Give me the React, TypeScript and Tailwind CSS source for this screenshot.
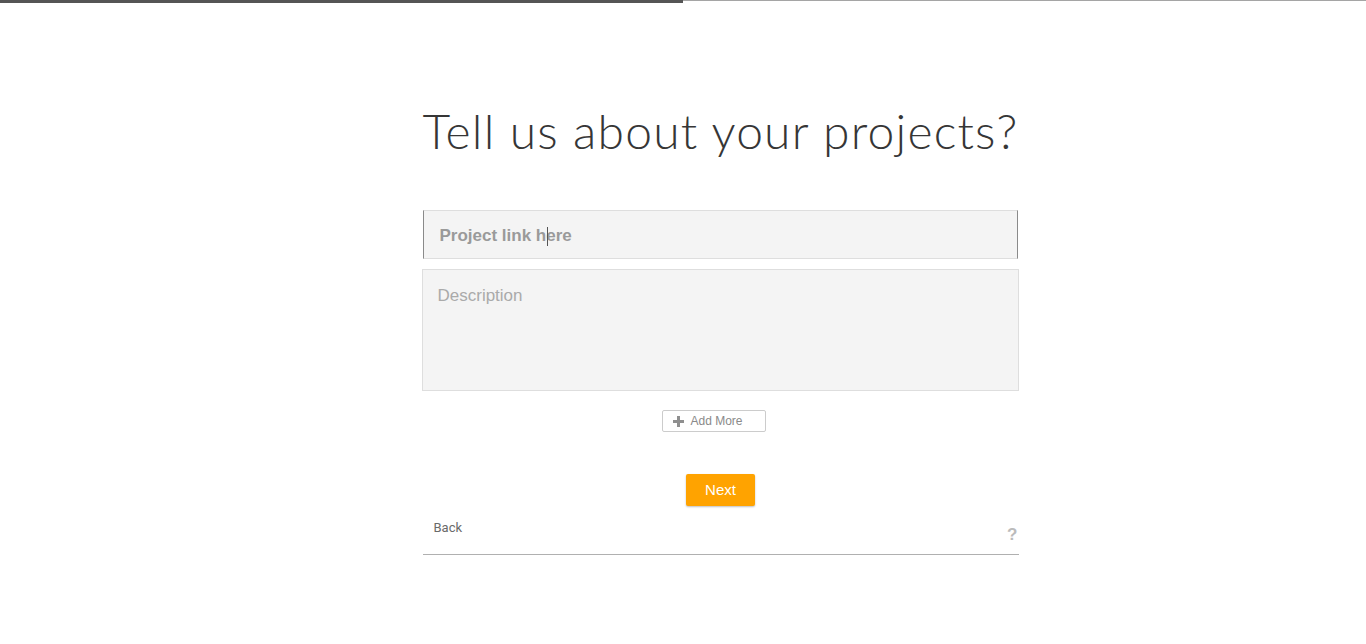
import { useState } from 'react';

const App = () => {
  const [link, setLink] = useState('');
  const [description, setDescription] = useState('');

  return (
    <div className="relative min-h-[644px] w-full bg-white font-['Liberation_Sans',Arial,sans-serif]">
      {/* progress */}
      <div className="flex h-[3px] w-full items-start">
        <div className="h-[3px] w-[683px] bg-[#555555]" />
        <div className="h-px flex-1 bg-[#a5a5a5]" />
      </div>

      <div className="flex justify-center pl-[75px]">
        <div className="flex w-[596px] flex-col items-stretch pt-[100px]">
          <h1 className="whitespace-nowrap text-center font-['Lato',sans-serif] text-[48px] font-light leading-[56px] tracking-[1.2px] text-[#363636]">
            Tell us about your projects?
          </h1>

          <div className="relative mt-[51px]">
            <input
              type="text"
              value={link}
              onChange={(e) => setLink(e.target.value)}
              placeholder="Project link here"
              className="h-[49px] w-[595px] border border-x-[#8a8a8a] border-y-[#dedede] bg-[#f4f4f4] px-4 pt-[3px] text-[17px] font-bold text-[#777] outline-none placeholder:text-[#9a9a9a]"
            />
            {!link && <span className="pointer-events-none absolute left-[124px] top-[17px] h-[19px] w-px bg-[#555]" />}
          </div>

          <textarea
            value={description}
            onChange={(e) => setDescription(e.target.value)}
            placeholder="Description"
            className="mt-[10px] h-[122px] w-[597px] -ml-px resize-none border border-[#dedede] bg-[#f4f4f4] px-[15px] pt-[13px] text-[17px] text-[#777] outline-none placeholder:text-[#aaaaaa]"
          />

          <div className="mt-[19px] flex justify-start pl-[239px]">
            <button
              type="button"
              className="flex h-[22px] w-[104px] items-center gap-[7px] rounded-[2px] border border-[#cccccc] bg-white pl-[10px] text-[12px] text-[#8a8a8a]"
            >
              <svg width="11" height="11" viewBox="0 0 11 11" className="shrink-0">
                <path d="M4 0h3v4h4v3H7v4H4V7H0V4h4z" fill="#8f8f8f" />
              </svg>
              Add More
            </button>
          </div>

          <div className="mt-[42px] flex justify-center">
            <button
              type="button"
              className="h-[32px] w-[69px] rounded-[2px] bg-[#ffa300] text-[15px] text-white shadow-[0_1px_2px_rgba(0,0,0,0.25)]"
            >
              Next
            </button>
          </div>

          <div className="mt-[12px] flex items-start justify-between border-b border-[#b0b0b0] pb-[9px]">
            <a href="#" className="ml-[11px] font-['Roboto',sans-serif] text-[13px] text-[#6a6a6a]">
              Back
            </a>
            <span className="mt-[7px] mr-px text-[17px] font-bold leading-5 text-[#bbbbbb]">?</span>
          </div>
        </div>
      </div>
    </div>
  );
};

export default App;
